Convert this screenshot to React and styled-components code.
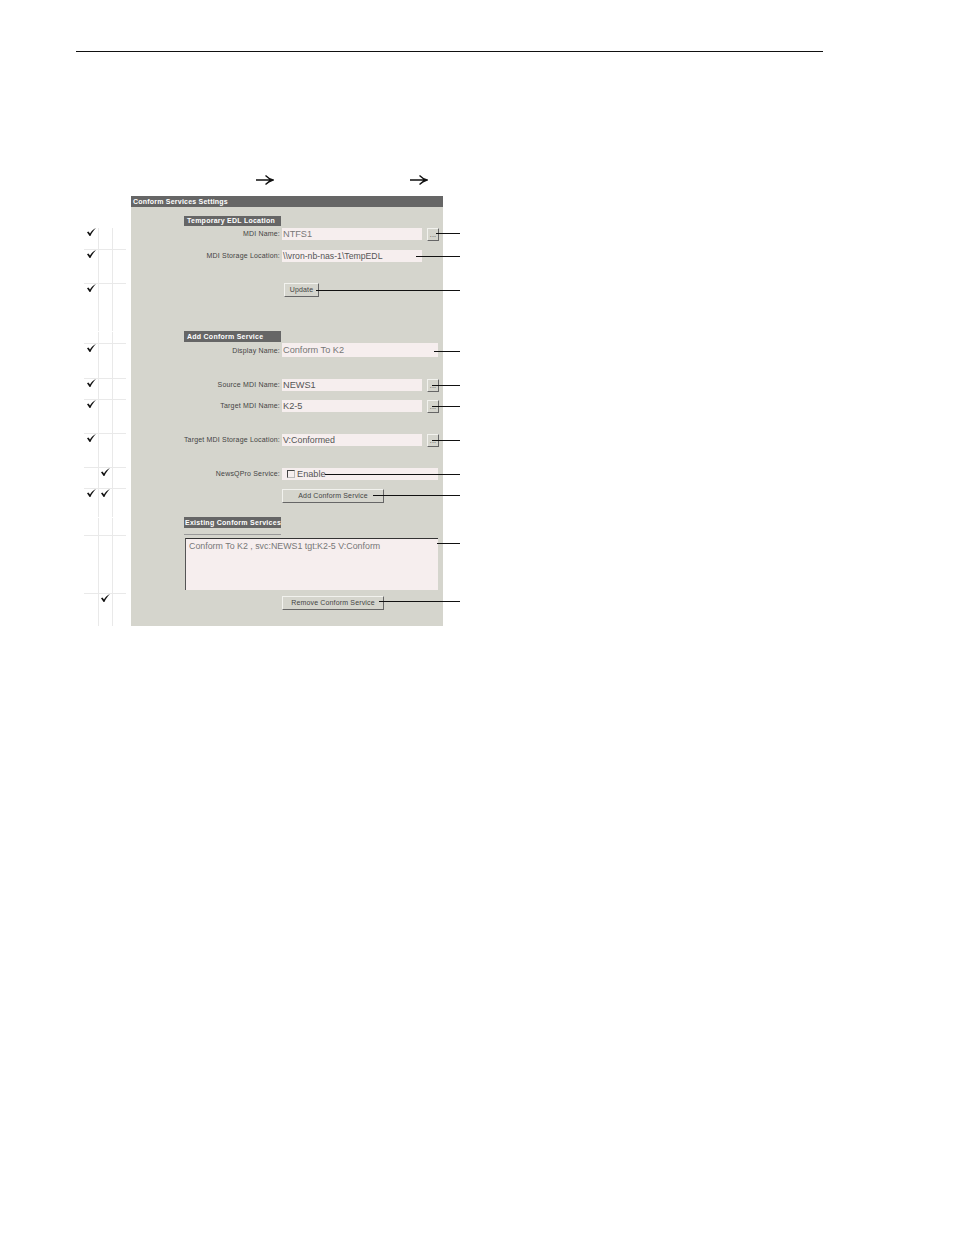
import React from 'react';
import styled, { createGlobalStyle } from 'styled-components';

const GlobalStyle = createGlobalStyle`
  html, body {
    margin: 0;
    background: #fff;
    font-family: "Liberation Sans", Arial, sans-serif;
  }
`;

const Page = styled.div`
  padding: 51px 0 0 76px;
  min-height: 1184px;
`;

const TopRule = styled.div`
  width: 747px;
  height: 1px;
  background: #111;
`;

const ArrowRow = styled.div`
  display: flex;
  gap: 136px;
  margin: 123px 0 11px 180px;
  height: 10px;
`;

const Figure = styled.div`
  width: 385px;
`;

const Row = styled.div`
  position: relative;
  display: grid;
  grid-template-columns: 42px 312px;
  column-gap: 5px;
  padding-left: 8px;
  height: ${p => p.$h}px;
`;

const MarkCell = styled.div`
  display: flex;
  border-top: 1px solid ${p => (p.$line ? '#e9e9e9' : 'transparent')};
  box-sizing: border-box;
`;

const Slot = styled.div`
  width: 15px;
  box-sizing: border-box;
  padding-left: 3px;
  border-right: ${p => (p.$ruled ? '1px solid #e9e9e9' : '0')};

  & + & {
    width: 14px;
    padding-left: 2px;
  }

  svg {
    display: block;
  }
`;

const PanelCell = styled.div`
  background: #d5d5cd;
  display: flex;
  align-items: flex-start;
  padding-top: ${p => p.$top || 0}px;
  box-sizing: border-box;
`;

const TitleBar = styled.div`
  width: 100%;
  height: 100%;
  background: #666;
  color: #fff;
  font-size: 7px;
  font-weight: 700;
  line-height: 11px;
  padding-left: 2px;
  letter-spacing: 0.22px;
  box-sizing: border-box;
`;

const SectionHead = styled.div`
  margin-left: 53px;
  width: 97px;
  height: ${p => p.$h || 10}px;
  background: #666;
  color: #fff;
  font-size: 7px;
  font-weight: 700;
  line-height: ${p => p.$h || 10}px;
  padding-left: ${p => p.$pad ?? 3}px;
  letter-spacing: ${p => p.$track ?? 0.25}px;
  box-sizing: border-box;
  white-space: nowrap;
`;

const Underline = styled.div`
  position: absolute;
  left: 108px;
  bottom: 0;
  width: 97px;
  height: 1px;
  background: #999;
`;

const Label = styled.label`
  width: 149px;
  margin-right: 2px;
  text-align: right;
  font-size: 7px;
  letter-spacing: 0.18px;
  line-height: ${p => p.$h || 12}px;
  color: #444;
  white-space: nowrap;
`;

const Field = styled.div`
  width: ${p => p.$w}px;
  height: ${p => p.$h || 12}px;
  background: #f6eeee;
  color: ${p => p.$ink || '#666'};
  font-size: ${p => p.$size || 9.2}px;
  line-height: ${p => p.$h || 12}px;
  padding-left: 1px;
  box-sizing: border-box;
  white-space: nowrap;
  overflow: hidden;
  display: flex;
  align-items: center;
`;

const Tick = styled.span`
  width: 6px;
  height: 6px;
  margin: 0 2px 0 4px;
  border: 1px solid #444;
  border-right-color: #bbb;
  border-bottom-color: #bbb;
  background: #f6eeee;
  box-sizing: content-box;
`;

const PushButton = styled.button`
  width: ${p => p.$w}px;
  height: ${p => p.$h || 13}px;
  margin-left: ${p => p.$left || 0}px;
  padding: 0;
  background: #d5d5cd;
  border: 1px solid;
  border-color: #f2f2ee #666 #666 #f2f2ee;
  color: #444;
  font-family: inherit;
  font-size: 7px;
  letter-spacing: 0.15px;
  line-height: 10px;
  white-space: nowrap;
`;

const ListBox = styled.div`
  margin-left: 54px;
  width: 253px;
  height: 52px;
  background: #f6eeee;
  border-top: 1px solid #333;
  border-left: 1px solid #555;
  box-sizing: border-box;
  color: #777;
  font-size: 8.85px;
  line-height: 12px;
  padding: 1px 0 0 3px;
  white-space: nowrap;
`;

const Leader = styled.div`
  position: absolute;
  left: ${p => p.$from - 76}px;
  top: ${p => p.$y}px;
  width: ${p => 460 - p.$from}px;
  height: 1px;
  background: #111;
`;

const Check = () => (
  <svg width="9" height="8" viewBox="0 0 9 8">
    <path d="M0 4.2 L1.4 3.6 L3 5.4 C4.4 3.2 6.4 1.2 9 0 C7 2 5 4.6 3.4 8 L2.6 8 Z" fill="#111" />
  </svg>
);

const Arrow = () => (
  <svg width="18" height="10" viewBox="0 0 18 10">
    <path d="M0 5 H16 M9.5 0.5 C11.5 2.6 14 4.2 17 5 C14 5.8 11.5 7.4 9.5 9.5" fill="none" stroke="#111" strokeWidth="1.3" />
  </svg>
);

// one line of the figure: the tick columns on the left, the panel strip on the right
const Line = ({ h, marks, line, top, leader, children }) => (
  <Row $h={h}>
    <MarkCell $line={line}>
      <Slot $ruled={marks !== undefined}>{marks && marks[0] ? <Check /> : null}</Slot>
      <Slot $ruled={marks !== undefined}>{marks && marks[1] ? <Check /> : null}</Slot>
    </MarkCell>
    <PanelCell $top={top}>{children}</PanelCell>
    {leader ? <Leader $from={leader[0]} $y={leader[1]} /> : null}
  </Row>
);

const Browse = () => <PushButton $w={12} $left={5}>...</PushButton>;

export default function App() {
  return (
    <>
      <GlobalStyle />
      <Page>
        <TopRule />
        <ArrowRow>
          <Arrow />
          <Arrow />
        </ArrowRow>
        <Figure>
          <Line h={11}>
            <TitleBar>Conform Services Settings</TitleBar>
          </Line>
          <Line h={9} />
          <Line h={11}>
            <SectionHead>Temporary EDL Location</SectionHead>
          </Line>
          <Line h={22} marks={[1, 0]} top={1} leader={[436, 6]}>
            <Label>MDI Name:</Label>
            <Field $w={140} $ink="#777">NTFS1</Field>
            <Browse />
          </Line>
          <Line h={34} marks={[1, 0]} line top={1} leader={[416, 7]}>
            <Label>MDI Storage Location:</Label>
            <Field $w={140} $ink="#555" $size={8.7}>\\vron-nb-nas-1\TempEDL</Field>
          </Line>
          <Line h={48} marks={[1, 0]} line leader={[316, 7]}>
            <Label />
            <PushButton $w={35} $h={14} $left={2}>Update</PushButton>
          </Line>
          <Line h={12} marks={[0, 0]}>
            <SectionHead $h={11}>Add Conform Service</SectionHead>
          </Line>
          <Line h={35} marks={[1, 0]} line leader={[434, 8]}>
            <Label $h={15}>Display Name:</Label>
            <Field $w={156} $h={14} $ink="#777">Conform To K2</Field>
          </Line>
          <Line h={21} marks={[1, 0]} line top={1} leader={[432, 7]}>
            <Label>Source MDI Name:</Label>
            <Field $w={140} $ink="#555">NEWS1</Field>
            <Browse />
          </Line>
          <Line h={34} marks={[1, 0]} line top={1} leader={[432, 7]}>
            <Label>Target MDI Name:</Label>
            <Field $w={140} $ink="#555">K2-5</Field>
            <Browse />
          </Line>
          <Line h={34} marks={[1, 0]} line top={1} leader={[432, 7]}>
            <Label>Target MDI Storage Location:</Label>
            <Field $w={140} $ink="#555" $size={8.9}>V:Conformed</Field>
            <Browse />
          </Line>
          <Line h={21} marks={[0, 1]} line top={1} leader={[325, 7]}>
            <Label>NewsQPro Service:</Label>
            <Field $w={156} $ink="#555">
              <Tick />
              Enable
            </Field>
          </Line>
          <Line h={29} marks={[1, 1]} line top={1} leader={[373, 7]}>
            <Label />
            <PushButton $w={102} $h={14}>Add Conform Service</PushButton>
          </Line>
          <Line h={18} marks={[0, 0]}>
            <SectionHead $h={11} $pad={1} $track={0.28}>Existing Conform Services</SectionHead>
            <Underline />
          </Line>
          <Line h={58} marks={[0, 0]} line top={3} leader={[437, 8]}>
            <ListBox>Conform To K2 , svc:NEWS1 tgt:K2-5 V:Conform</ListBox>
          </Line>
          <Line h={33} marks={[0, 1]} line top={3} leader={[379, 8]}>
            <Label />
            <PushButton $w={102} $h={14}>Remove Conform Service</PushButton>
          </Line>
        </Figure>
      </Page>
    </>
  );
}
